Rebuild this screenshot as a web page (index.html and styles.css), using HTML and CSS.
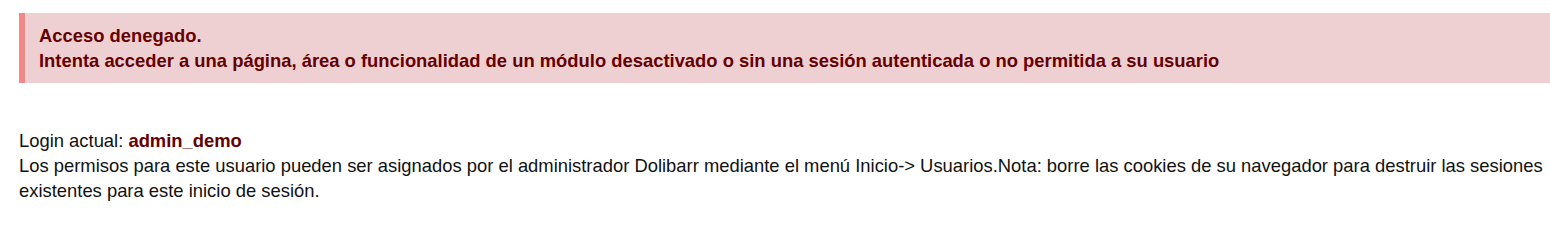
FILE: index.html
```html
<!DOCTYPE html>
<html lang="es">
<head>
<meta charset="utf-8">
<title>Acceso denegado</title>
<link rel="stylesheet" href="styles.css">
</head>
<body>
<div class="page">
  <div class="error">
    <div>Acceso denegado.</div>
    <div>Intenta acceder a una página, área o funcionalidad de un módulo desactivado o sin una sesión autenticada o no permitida a su usuario</div>
  </div>
  <div class="info">
    <div>Login actual: <b class="login">admin_demo</b></div>
    <div>Los permisos para este usuario pueden ser asignados por el administrador Dolibarr mediante el menú Inicio-&gt; Usuarios.Nota: borre las cookies de su navegador para destruir las sesiones existentes para este inicio de sesión.</div>
  </div>
</div>
</body>
</html>
```
FILE: styles.css
```css
html, body {
  margin: 0;
  padding: 0;
  background: #ffffff;
}
body {
  font-family: "Liberation Sans", Arial, sans-serif;
  font-size: 18.4px;
  line-height: 25px;
  color: #111111;
}
.page {
  padding: 13px 0 0 19px;
}
.error {
  background: #efd0d2;
  border-left: 6px solid #f08888;
  padding: 10px 0 10px 14px;
  color: #660000;
  font-weight: bold;
}
.info {
  margin-top: 45px;
}
.login {
  color: #660000;
}
```
